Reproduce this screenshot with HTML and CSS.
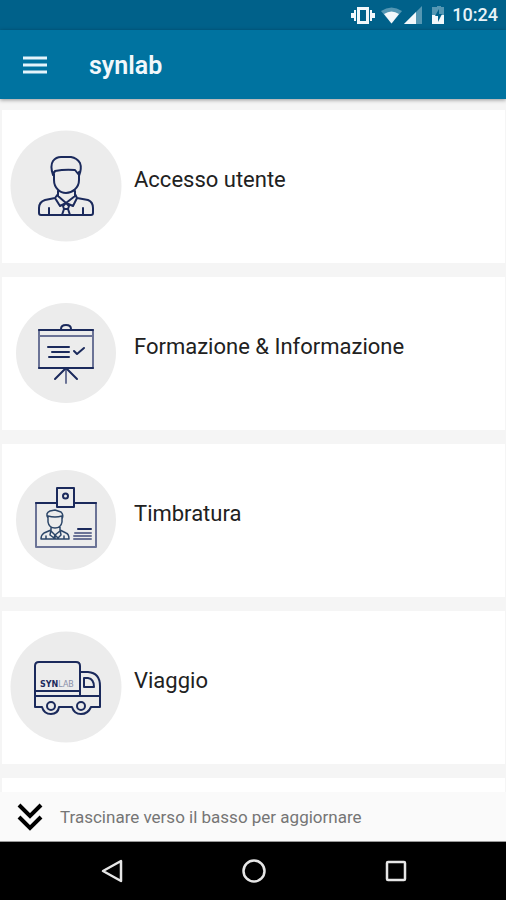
FILE: index.html
```html
<!DOCTYPE html>
<html lang="it">
<head>
<meta charset="utf-8">
<meta name="viewport" content="width=device-width, initial-scale=1">
<title>synlab</title>
<link rel="stylesheet" href="styles.css">
</head>
<body>
<div class="status">
  <svg class="status-icons" viewBox="350 0 98 30" aria-hidden="true">
    <path class="solid" d="M357 7h12v17h-12z M360 10v11h6V10z" fill-rule="evenodd"/>
    <path class="solid" d="M354 10h2v11h-2z M351 13h3v5h-3z M370 10h2v11h-2z M372 13h3v5h-3z"/>
    <path class="faint" d="M381 11q10.500-7 21 0L391.500 23.500z"/>
    <path class="solid" d="M384 14q7.500-5 15 0L391.500 23.500z"/>
    <path class="faint" d="M422 6v18h-18z"/>
    <path class="solid" d="M416 12v12h-12z"/>
    <path class="faint" d="M435 7h2V6h4v1h3v17h-12V7z"/>
    <path class="solid" d="M432 15h12v9h-12z"/>
    <path class="bolt" d="M439 9l-4 7h3v6l4-8h-3z"/>
  </svg>
  <time class="clock">10:24</time>
</div>
<header class="bar">
  <button class="menu" type="button" aria-label="Menu">
    <svg viewBox="0 0 24 20" aria-hidden="true"><path d="M0 2h24M0 9h24M0 16h24"/></svg>
  </button>
  <h1 class="title">synlab</h1>
</header>
<main class="content">
  <ul class="cards">
    <li><a class="card" href="#accesso">
      <svg class="icon" viewBox="10 130 112 112" aria-hidden="true">
        <circle class="disc" cx="66" cy="186" r="55.500"/>
        <path d="M53 175C51 169 51 164 53 161Q56 157 61 157H71Q77 158 80 163Q82 168 79 176M53 175L55 171Q65 169 75 170L79 175M54 172V180C54 188 60 193 66 193S79 188 79 180V172M58 191V196L66 203L75 196V191M58 194L55 198L60 206L66 203L73 206L77 198L75 194M55 198L45 200Q39 202 39 208V213Q39 215 41 215H91Q93 215 93 213V208Q93 202 88 200L77 198M49 208V215M83 208V215M63 206L66 203L69 206L68 209H64zM64 209L62 215M68 209L70 215"/>
      </svg>
      <span class="label">Accesso utente</span>
    </a></li>
    <li><a class="card" href="#formazione">
      <svg class="icon" viewBox="10 298 112 112" aria-hidden="true">
        <circle class="disc" cx="66" cy="354" r="50"/>
        <path class="pale" d="M39 331V369M93 331V369M39 337H93M66 369V384"/>
        <path d="M39 331H93M39 369H93M61 330Q61 326 66 326T71 330M66 369L55 380M66 369L77 380M48 348H69M52 353H69M49 358H69M74 352L77 355L84 349"/>
      </svg>
      <span class="label">Formazione &amp; Informazione</span>
    </a></li>
    <li><a class="card" href="#timbratura">
      <svg class="icon" viewBox="10 465 112 112" aria-hidden="true">
        <circle class="disc" cx="66" cy="521" r="50"/>
        <path class="pale" d="M36 504V548H96V504"/>
        <path d="M36 504H57M74 504H96M57 489H74V508H57zM78 530H91"/>
        <circle cx="65.500" cy="497" r="2.500"/>
        <path class="pale" d="M75 534H91M74 537H91M74 540H91"/>
        <path class="fine" d="M48 519Q45 514 50 512L55 511L61 513Q64 516 62 520M48 517Q55 519 62 517V523Q61 529 55 529T48 523zM51 528V532L55 536L60 532V528M51 531L44 534Q41 536 41 540H69Q69 535 66 534L60 531M51 531L50 536L54 539L55 536L58 539L61 536L60 531M55 536V540M46 537V540M64 537V540"/>
      </svg>
      <span class="label">Timbratura</span>
    </a></li>
    <li><a class="card" href="#viaggio">
      <svg class="icon" viewBox="10 632 112 112" aria-hidden="true">
        <circle class="disc" cx="66" cy="688" r="55.500"/>
        <path d="M42 708H35V667Q35 663 39 663H76Q80 663 80 667V697M35 692H80M35 697H100M80 673H88Q100 674 100 687V708H91M42 708Q44 715 51 715T59 708H72Q74 715 81 715T91 708M84 679H88Q94 680 94 688H84z"/>
        <circle cx="51" cy="707" r="4"/>
        <circle cx="81" cy="707" r="4"/>
        <text class="livery" x="40" y="688">SYN<tspan class="livery-light">LAB</tspan></text>
      </svg>
      <span class="label">Viaggio</span>
    </a></li>
    <li class="card"></li>
  </ul>
</main>
<div class="refresh">
  <svg class="chevrons" viewBox="0 0 26 28" aria-hidden="true"><path d="M2 2L13 13L24 2M2 14L13 25L24 14"/></svg>
  <span>Trascinare verso il basso per aggiornare</span>
</div>
<nav class="system">
  <button type="button" aria-label="Indietro"><svg viewBox="0 0 26 26" aria-hidden="true"><path d="M22 3V23L4 13z"/></svg></button>
  <button type="button" aria-label="Home"><svg viewBox="0 0 26 26" aria-hidden="true"><circle cx="13" cy="13" r="10.500"/></svg></button>
  <button type="button" aria-label="Recenti"><svg viewBox="0 0 26 26" aria-hidden="true"><rect x="4" y="4" width="18" height="18" rx="1"/></svg></button>
</nav>
</body>
</html>
```
FILE: styles.css
```css
* {
  box-sizing: border-box;
}

body {
  display: flex;
  flex-direction: column;
  height: 100vh;
  margin: 0;
  background: #f5f5f5;
  color: #212121;
  font-family: Roboto, "Liberation Sans", sans-serif;
}

button {
  display: flex;
  padding: 0;
  border: 0;
  background: none;
}

svg {
  display: block;
  fill: none;
}

.status {
  display: flex;
  flex: none;
  align-items: center;
  justify-content: flex-end;
  gap: 4px;
  height: 30px;
  padding: 0 8px;
  background: #00618a;
  color: #e8f3f8;
}

.status-icons {
  width: 98px;
  height: 30px;
}

.solid {
  fill: #f2f8fb;
}

.faint {
  fill: #5597b3;
}

.bolt {
  fill: #00618a;
}

.clock {
  font-size: 18px;
  font-weight: 500;
  line-height: 32px;
}

.bar {
  display: flex;
  flex: none;
  align-items: center;
  gap: 42px;
  height: 69px;
  padding: 2px 23px 0;
  background: #0073a0;
  color: #f2f8fb;
  box-shadow: 0 1px 4px rgba(0, 0, 0, 0.4);
  z-index: 1;
}

.menu svg {
  width: 24px;
  height: 20px;
  stroke: #e4f4fb;
  stroke-width: 3;
}

.title {
  margin: 0;
  font-size: 25px;
  font-weight: 600;
  line-height: 32px;
}

.content {
  flex: 1 1 0;
  min-height: 0;
  overflow: hidden;
}

.cards {
  display: grid;
  gap: 14px;
  margin: 0;
  padding: 11px 1px 0 2px;
  list-style: none;
}

.card {
  display: flex;
  align-items: center;
  gap: 12px;
  min-height: 153px;
  padding: 20px 8px 21px;
  background: #fff;
  color: inherit;
  text-decoration: none;
}

.icon {
  flex: none;
  width: 112px;
  height: 112px;
  stroke: #1b2a5c;
  stroke-width: 2;
  stroke-linecap: round;
  stroke-linejoin: round;
}

.disc {
  fill: #ececec;
  stroke: none;
}

.pale {
  stroke: #6b7396;
}

.fine {
  stroke: #2c4668;
  stroke-width: 1.5;
}

.livery {
  fill: #1b2a5c;
  stroke: none;
  font-family: "DejaVu Sans", sans-serif;
  font-size: 8px;
  font-weight: 700;
}

.livery-light {
  fill: #8a90aa;
  font-weight: 400;
}

.label {
  padding-bottom: 12px;
  font-size: 22px;
  line-height: 28px;
}

.refresh {
  display: flex;
  flex: none;
  align-items: center;
  gap: 17px;
  height: 50px;
  padding: 0 17px;
  border-bottom: 1px solid #999;
  background: #fafafa;
  color: #757575;
  font-size: 17px;
  line-height: 24px;
}

.chevrons {
  width: 26px;
  height: 28px;
  stroke: #000;
  stroke-width: 4;
}

.system {
  display: flex;
  flex: none;
  align-items: center;
  justify-content: center;
  gap: 116px;
  height: 58px;
  padding-left: 2px;
  background: #000;
}

.system svg {
  width: 26px;
  height: 26px;
  stroke: #e6e6e6;
  stroke-width: 2.5;
  stroke-linejoin: round;
}
```
